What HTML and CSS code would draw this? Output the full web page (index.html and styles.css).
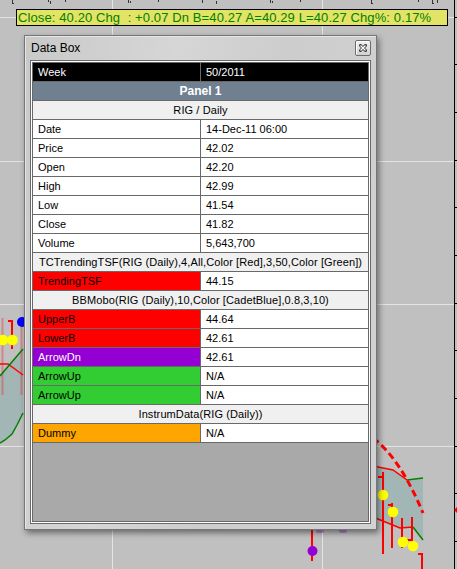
FILE: index.html
```html
<!DOCTYPE html>
<html>
<head>
<meta charset="utf-8">
<title>Data Box</title>
<link rel="stylesheet" href="styles.css">
</head>
<body>
<div class="desk">
  <svg class="plot" width="457" height="569" viewBox="0 0 457 569">
    <g stroke="#e4e4e4" stroke-width="1">
      <line x1="112.5" y1="0" x2="112.5" y2="569"/>
      <line x1="322.5" y1="0" x2="322.5" y2="569"/>
      <line x1="0" y1="17.5" x2="454" y2="17.5"/>
      <line x1="0" y1="161.5" x2="454" y2="161.5"/>
      <line x1="0" y1="304.5" x2="454" y2="304.5"/>
      <line x1="0" y1="446.5" x2="454" y2="446.5"/>
    </g>
    <g stroke="#333" stroke-width="1">
      <path d="M12.5 0v3M12 3.5h2M48.5 0v2M50.5 1v3M65.5 0v2M128.5 0v3M130.5 1v2M158.5 0v2M202.5 0v3M216.5 1v3M270.5 0v3M272.5 1v2M300.5 0v2M371.5 0v3M371 3.5h2M418.5 0v2M432.5 0v3M432 3.5h2M437.5 0v3"/>
    </g>
    <line x1="454.5" y1="0" x2="454.5" y2="569" stroke="#000"/>
    <g stroke="#000" stroke-width="1">
      <path d="M454 17.5h3M454 64.5h3M454 112.5h3M454 160.5h3M454 207.5h3M454 255.5h3M454 303.5h3M454 350.5h3M454 398.5h3M454 446.5h3M454 493.5h3M454 541.5h3"/>
    </g>
    <polygon points="454,510 458,506 458,514" fill="#ff0000"/>

    <!-- left series -->
    <polygon fill="#a3b6b6" points="0,375 23,349 23,413 17,425 12,434 5,440 0,443"/>
    <g stroke="rgba(255,0,0,0.3)" stroke-width="2">
      <line x1="2.5" y1="318" x2="2.5" y2="395"/>
      <line x1="21.5" y1="318" x2="21.5" y2="395"/>
    </g>
    <polyline fill="none" stroke="#ff0000" stroke-width="1.5" points="0,364 8,364 23,375"/>
    <polyline fill="none" stroke="#008000" stroke-width="1.5" points="0,376 23,349"/>
    <polyline fill="none" stroke="#008000" stroke-width="1.5" points="23,413 17,425 12,434 5,440 0,443"/>
    <path d="M12 320v29M8 321h4" stroke="#ff0000" stroke-width="2" fill="none"/>
    <circle cx="3" cy="340" r="5.3" fill="#ffff00"/>
    <circle cx="12.5" cy="340" r="5.3" fill="#ffff00"/>
    <circle cx="22" cy="322" r="5" fill="#0000ff"/>

    <!-- right series -->
    <polygon fill="#a3b6b6" points="373,466 393,470 407,480 423,478 423,540 413,527 400,528 373,517"/>
    <polyline fill="none" stroke="#ff0000" stroke-width="1.5" points="373,466 393,470 407,480"/>
    <polyline fill="none" stroke="#008000" stroke-width="1.5" points="407,480 423,478"/>
    <polyline fill="none" stroke="#ff0000" stroke-width="1.5" points="373,517 400,528 413,527"/>
    <polyline fill="none" stroke="#008000" stroke-width="1.5" points="413,527 423,540"/>
    <path d="M373 438 Q400 458 423 513" fill="none" stroke="#ff0000" stroke-width="3" stroke-dasharray="7 4"/>
    <g stroke="#ff0000" stroke-width="2" fill="none">
      <path d="M383 472v82M378 477h5"/>
      <path d="M392 503v45M388 505h4"/>
      <path d="M402 518v30"/>
      <path d="M412 517v34M407 540h5"/>
      <path d="M422 553v16M418 554h4"/>
      <path d="M312 529v17M312 555v6"/>
    </g>
    <circle cx="383" cy="495" r="5.3" fill="#ffff00"/>
    <circle cx="393" cy="512" r="5.3" fill="#ffff00"/>
    <circle cx="403" cy="542" r="5.3" fill="#ffff00"/>
    <circle cx="413" cy="546" r="5.3" fill="#ffff00"/>
    <circle cx="312.5" cy="551" r="5" fill="#9400d3"/>
    <ellipse cx="320" cy="531" rx="4" ry="2" fill="rgba(148,0,211,0.35)"/>
    <ellipse cx="343" cy="531" rx="4" ry="2" fill="rgba(148,0,211,0.35)"/>
  </svg>

  <div class="quote">Close: 40.20 Chg  : +0.07 Dn B=40.27 A=40.29 L=40.27 Chg%: 0.17%</div>

  <div class="win">
    <div class="titlebar">
      <span class="title">Data Box</span>
      <span class="close">
        <svg width="8" height="8" viewBox="0 0 8 8">
          <path d="M1.5 1.5l5 5M6.5 1.5l-5 5" stroke="#3a3a3a" stroke-width="3" stroke-linecap="square"/>
          <path d="M1.5 1.5l5 5M6.5 1.5l-5 5" stroke="#ffffff" stroke-width="1.3"/>
        </svg>
      </span>
    </div>
    <div class="client">
      <div class="client-in">
        <div class="pane">
          <div class="row dark"><div class="c l">Week</div><div class="c">50/2011</div></div>
          <div class="row panel"><div class="c full">Panel 1</div></div>
          <div class="row head"><div class="c full">RIG / Daily</div></div>
          <div class="row"><div class="c l">Date</div><div class="c">14-Dec-11 06:00</div></div>
          <div class="row"><div class="c l">Price</div><div class="c">42.02</div></div>
          <div class="row"><div class="c l">Open</div><div class="c">42.20</div></div>
          <div class="row"><div class="c l">High</div><div class="c">42.99</div></div>
          <div class="row"><div class="c l">Low</div><div class="c">41.54</div></div>
          <div class="row"><div class="c l">Close</div><div class="c">41.82</div></div>
          <div class="row"><div class="c l">Volume</div><div class="c">5,643,700</div></div>
          <div class="row head"><div class="c full">TCTrendingTSF(RIG (Daily),4,All,Color [Red],3,50,Color [Green])</div></div>
          <div class="row"><div class="c l red">TrendingTSF</div><div class="c">44.15</div></div>
          <div class="row head"><div class="c full">BBMobo(RIG (Daily),10,Color [CadetBlue],0.8,3,10)</div></div>
          <div class="row"><div class="c l red">UpperB</div><div class="c">44.64</div></div>
          <div class="row"><div class="c l red">LowerB</div><div class="c">42.61</div></div>
          <div class="row"><div class="c l violet">ArrowDn</div><div class="c">42.61</div></div>
          <div class="row"><div class="c l lime">ArrowUp</div><div class="c">N/A</div></div>
          <div class="row"><div class="c l lime">ArrowUp</div><div class="c">N/A</div></div>
          <div class="row head"><div class="c full">InstrumData(RIG (Daily))</div></div>
          <div class="row"><div class="c l orange">Dummy</div><div class="c">N/A</div></div>
        </div>
      </div>
    </div>
  </div>
</div>
</body>
</html>
```

FILE: styles.css
```css
html, body {
  margin: 0;
  padding: 0;
}

body {
  width: 457px;
  height: 569px;
  overflow: hidden;
  background: #c0c0c0;
  font-family: "Liberation Sans", Arial, sans-serif;
}

.desk {
  position: relative;
  width: 457px;
  height: 569px;
  overflow: hidden;
  background: #c0c0c0;
}

.plot {
  position: absolute;
  left: 0;
  top: 0;
  display: block;
}

.quote {
  position: absolute;
  left: 16px;
  top: 9px;
  width: 432px;
  height: 17px;
  box-sizing: border-box;
  border: 1px solid #000;
  background: #e3e366;
  color: #008000;
  font-size: 13px;
  letter-spacing: 0.11px;
  line-height: 15px;
  padding-left: 1px;
  white-space: pre;
}

.win {
  position: absolute;
  left: 24px;
  top: 35px;
  width: 353px;
  height: 495px;
  box-sizing: border-box;
  border: 1px solid #767676;
  padding: 0 5px 5px 5px;
  background: linear-gradient(100deg, #c9c9c9 0%, #d6d6d6 35%, #cdcdcd 60%, #d2d2d2 100%);
  box-shadow: 2px 3px 6px rgba(0, 0, 0, 0.45), inset 1px 1px 0 #e6e6e6;
  display: flex;
  flex-direction: column;
}

.titlebar {
  height: 24px;
  flex: none;
  display: flex;
  align-items: center;
  justify-content: space-between;
}

.title {
  font-size: 12px;
  color: #000;
  padding-left: 1px;
}

.close {
  width: 16px;
  height: 16px;
  box-sizing: border-box;
  border: 1px solid #6c6c6c;
  border-radius: 2px;
  background: linear-gradient(#f2f2f2, #cfcfcf);
  box-shadow: inset 1px 1px 0 #ffffff;
  display: flex;
  align-items: center;
  justify-content: center;
}

.close svg {
  display: block;
}

.client {
  flex: 1;
  display: flex;
  border: 1px solid #6a6a6a;
}

.client-in {
  flex: 1;
  display: flex;
  border: 1px solid #ffffff;
}

.pane {
  flex: 1;
  border: 1px solid #696969;
  background: #a9a9a9;
}

.row {
  display: grid;
  grid-template-columns: 168px 167px;
  height: 19px;
  box-sizing: border-box;
  border-bottom: 1px solid #696969;
  background: #ffffff;
  font-size: 11px;
  line-height: 18px;
  color: #000;
}

.c {
  padding-left: 5px;
  white-space: nowrap;
  overflow: hidden;
}

.c.l {
  border-right: 1px solid #696969;
}

.c.full {
  grid-column: 1 / 3;
  padding-left: 0;
  text-align: center;
  overflow: visible;
}

.row.head .c.full {
  letter-spacing: 0.1px;
}

.row.dark {
  background: #000;
  color: #fff;
}

.row.panel {
  background: #708090;
  color: #fff;
  font-weight: bold;
  font-size: 12px;
}

.row.head {
  background: #f0f0f0;
}

.red {
  background: #ff0000;
}

.violet {
  background: #9400d3;
  color: #fff;
}

.lime {
  background: #32cd32;
}

.orange {
  background: #ffa500;
}
```
